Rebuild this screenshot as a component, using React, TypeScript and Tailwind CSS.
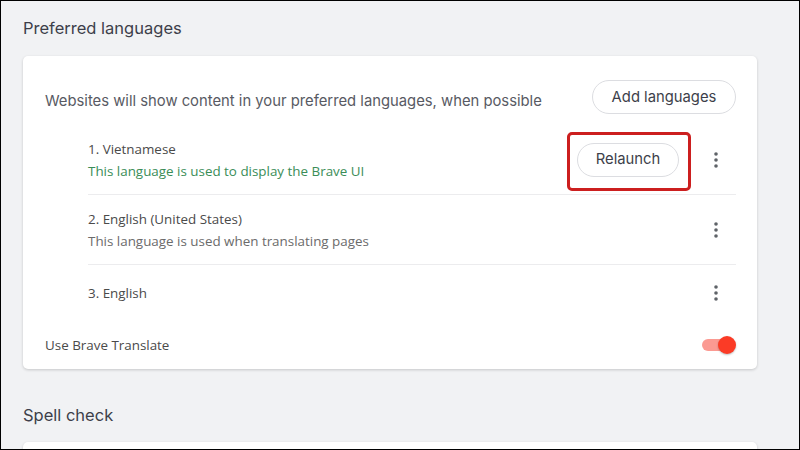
import { useState } from "react";

const langs = [
  { name: "1. Vietnamese", note: "This language is used to display the Brave UI", green: true, relaunch: true },
  { name: "2. English (United States)", note: "This language is used when translating pages" },
  { name: "3. English" },
];

function Kebab() {
  return (
    <div className="w-[40px] h-[40px] flex items-center justify-center">
      <svg width="4" height="16" viewBox="0 0 4 16">
        <circle cx="2" cy="2" r="1.8" fill="#5f6368" />
        <circle cx="2" cy="8" r="1.8" fill="#5f6368" />
        <circle cx="2" cy="14" r="1.8" fill="#5f6368" />
      </svg>
    </div>
  );
}

export default function App() {
  const [on, setOn] = useState(true);
  const head = { fontFamily: "Inter, 'Open Sans', sans-serif" };
  const body = { fontFamily: "'Open Sans', 'Noto Sans', sans-serif" };

  return (
    <div className="w-[800px] h-[450px] overflow-hidden border border-black bg-[#f1f2f4] pl-[22px] pr-[42px]">
      <h2 style={head} className="pt-[16px] h-[55px] text-[16.5px] leading-[22px] text-[#3d3f4a]">
        Preferred languages
      </h2>

      <div className="bg-white rounded-[5px] shadow-[0_1px_3px_rgba(0,0,0,0.18)] pl-[22px] pr-[21px] pt-[24px]">
        <div className="flex items-start justify-between h-[45px]">
          <span style={head} className="mt-[11px] text-[14.8px] leading-[20px] text-[#585a63]">
            Websites will show content in your preferred languages, when possible
          </span>
          <button
            style={head}
            className="h-[34px] w-[144px] rounded-full border border-[#dcdde1] text-[14.8px] text-[#3d3f4a]"
          >
            Add languages
          </button>
        </div>

        <div className="ml-[43px]">
          {langs.map((l, i) => (
            <div
              key={l.name}
              className={`flex items-center justify-between ${i < 2 ? "h-[70px] border-b border-[#ececee]" : "h-[56px]"}`}
            >
              <div style={body} className="text-[13.4px] leading-[22px]">
                <div className="text-[#4a4a4a]">{l.name}</div>
                {l.note && (
                  <div className={l.green ? "text-[#3a8d57]" : "text-[#6b6b6b]"}>{l.note}</div>
                )}
              </div>
              <div className="flex items-center">
                {l.relaunch && (
                  <div className="relative mr-[17px]">
                    <button
                      style={head}
                      className="h-[34px] w-[102px] rounded-full border border-[#dcdde1] text-[14.8px] text-[#3d3f4a]"
                    >
                      Relaunch
                    </button>
                    <div className="absolute left-[-10px] right-[-12px] top-[-11px] bottom-[-14px] border-[3px] border-[#cc1f1f] rounded-[5px]" />
                  </div>
                )}
                <Kebab />
              </div>
            </div>
          ))}
        </div>

        <div className="flex items-center justify-between h-[48px]">
          <span style={body} className="text-[13.4px] text-[#4a4a4a]">
            Use Brave Translate
          </span>
          <button onClick={() => setOn(!on)} className="relative w-[34px] h-[18px]">
            <span className="absolute left-0 top-[3px] w-[30px] h-[12px] rounded-full bg-[#fb9a92]" />
            <span className="absolute right-0 top-0 w-[18px] h-[18px] rounded-full bg-[#fb3b26] shadow-[0_1px_2px_rgba(0,0,0,0.25)]" />
          </button>
        </div>
      </div>

      <h2 style={head} className="mt-[35px] h-[38px] text-[16.5px] leading-[22px] text-[#3d3f4a]">
        Spell check
      </h2>
      <div className="bg-white rounded-[5px] shadow-[0_1px_3px_rgba(0,0,0,0.18)] h-[60px]" />
    </div>
  );
}
